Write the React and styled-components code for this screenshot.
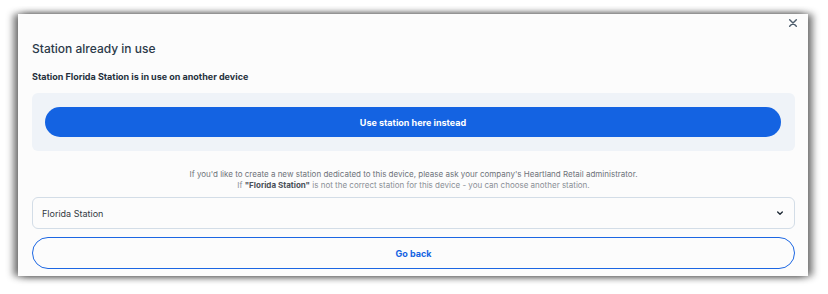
import React from 'react';
import styled, { createGlobalStyle } from 'styled-components';

const GlobalStyle = createGlobalStyle`
  body {
    margin: 0;
    background: #ffffff;
    font-family: Inter, "Noto Sans", sans-serif;
  }
`;

function ChevronDown() {
  return (
    <svg width="8" height="8" viewBox="0 0 24 24" fill="none" stroke="#1f2a36" strokeWidth="4" strokeLinecap="round" strokeLinejoin="round">
      <path d="M5 9l7 7 7-7" />
    </svg>
  );
}

function CloseIcon() {
  return (
    <svg width="10" height="10" viewBox="0 0 24 24" fill="none" stroke="#4d5d6c" strokeWidth="3.5" strokeLinecap="round">
      <path d="M4 4l16 16M20 4L4 20" />
    </svg>
  );
}

function App() {
  return (
    <>
      <GlobalStyle />
      <Page>
        <Dialog>
          <CloseButton aria-label="Close">
            <CloseIcon />
          </CloseButton>
          <Title>Station already in use</Title>
          <Subtitle>Station Florida Station is in use on another device</Subtitle>
          <Panel>
            <PrimaryButton>Use station here instead</PrimaryButton>
          </Panel>
          <Info>
            <InfoLine>If you'd like to create a new station dedicated to this device, please ask your company's Heartland Retail administrator.</InfoLine>
            <InfoLine light>If <b>"Florida Station"</b> is not the correct station for this device - you can choose another station.</InfoLine>
          </Info>
          <Select>
            <span>Florida Station</span>
            <ChevronDown />
          </Select>
          <OutlineButton>Go back</OutlineButton>
        </Dialog>
      </Page>
    </>
  );
}

const Page = styled.div`
  padding: 14px 20px 18px 18px;
`;

const Dialog = styled.div`
  position: relative;
  width: 790px;
  box-sizing: border-box;
  padding: 27px 13px 7px 14px;
  background: #fcfcfc;
  box-shadow: -5px 0 7px rgba(0, 0, 0, 0.45), 5px 0 7px rgba(0, 0, 0, 0.45), 0 1px 8px rgba(0, 0, 0, 0.25);
  display: flex;
  flex-direction: column;
`;

const CloseButton = styled.button`
  position: absolute;
  top: 4px;
  right: 10px;
  padding: 0;
  border: none;
  background: none;
  display: flex;
`;

const Title = styled.h2`
  margin: 0;
  font-size: 12px;
  line-height: 16px;
  font-weight: 500;
  color: #2b3949;
`;

const Subtitle = styled.h3`
  margin: 13px 0 0;
  font-size: 9px;
  line-height: 14px;
  font-weight: 700;
  color: #26313d;
`;

const Panel = styled.div`
  margin-top: 9px;
  padding: 14px 14px 14px 13px;
  background: #eff3f8;
  border-radius: 6px;
`;

const PrimaryButton = styled.button`
  width: 100%;
  height: 30px;
  border: none;
  border-radius: 15px;
  background: #1463e2;
  color: #ffffff;
  font-family: inherit;
  font-size: 9px;
  font-weight: 700;
`;

const Info = styled.div`
  margin-top: 18px;
  text-align: center;
  font-size: 8px;
  line-height: 10.5px;
`;

const InfoLine = styled.div`
  color: ${(p) => (p.light ? '#8a8f96' : '#6e737a')};
  b {
    font-weight: 700;
    color: #4a5058;
  }
`;

const Select = styled.div`
  margin-top: 7px;
  height: 32px;
  box-sizing: border-box;
  padding: 0 10px 0 9px;
  border: 1px solid #d3dde7;
  border-radius: 6px;
  display: flex;
  align-items: center;
  justify-content: space-between;
  font-size: 9px;
  color: #333a42;
`;

const OutlineButton = styled.button`
  margin-top: 8px;
  height: 32px;
  border: 1px solid #1c67e3;
  border-radius: 16px;
  background: transparent;
  color: #1463e2;
  font-family: inherit;
  font-size: 9px;
  font-weight: 700;
`;

export default App;
